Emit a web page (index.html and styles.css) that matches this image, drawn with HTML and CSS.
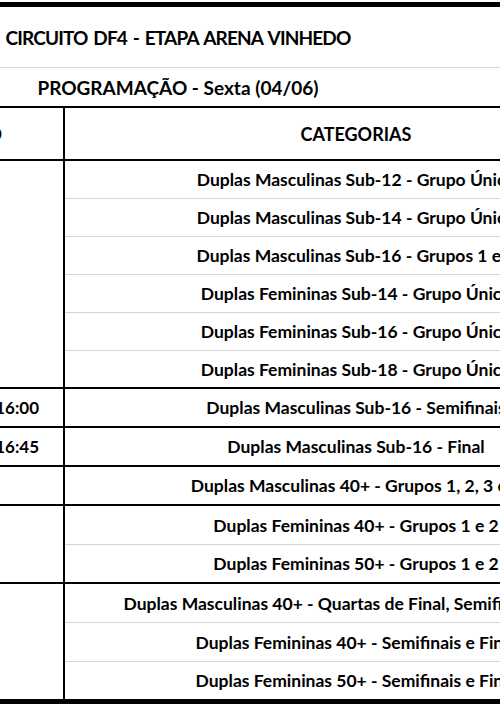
FILE: index.html
```html
<!DOCTYPE html>
<html lang="pt-BR">
<head>
<meta charset="utf-8">
<title>Circuito DF4 - Etapa Arena Vinhedo</title>
<link rel="stylesheet" href="styles.css">
</head>
<body>
<div class="sheet">
  <div class="title">CIRCUITO DF4 - ETAPA ARENA VINHEDO</div>
  <div class="subtitle">PROGRAMAÇÃO - Sexta (04/06)</div>
  <div class="table">
    <div class="time head">HORÁRIO</div>
    <div class="cat head">CATEGORIAS</div>

    <div class="time group6"><span class="hidden-time">13:00 - 15:15</span></div>
    <div class="cat">Duplas Masculinas Sub-12 - Grupo Único</div>
    <div class="cat">Duplas Masculinas Sub-14 - Grupo Único</div>
    <div class="cat">Duplas Masculinas Sub-16 - Grupos 1 e 2</div>
    <div class="cat">Duplas Femininas Sub-14 - Grupo Único</div>
    <div class="cat">Duplas Femininas Sub-16 - Grupo Único</div>
    <div class="cat end">Duplas Femininas Sub-18 - Grupo Único</div>

    <div class="time near">15:15 - 16:00</div>
    <div class="cat end">Duplas Masculinas Sub-16 - Semifinais</div>

    <div class="time near">16:00 - 16:45</div>
    <div class="cat end">Duplas Masculinas Sub-16 - Final</div>

    <div class="time"><span class="hidden-time">16:45 - 18:30</span></div>
    <div class="cat end">Duplas Masculinas 40+ - Grupos 1, 2, 3 e 4</div>

    <div class="time group2"><span class="hidden-time">18:30 - 20:00</span></div>
    <div class="cat">Duplas Femininas 40+ - Grupos 1 e 2</div>
    <div class="cat end">Duplas Femininas 50+ - Grupos 1 e 2</div>

    <div class="time group3 last"><span class="hidden-time">20:00 - 22:00</span></div>
    <div class="cat">Duplas Masculinas 40+ - Quartas de Final, Semifinais e Final</div>
    <div class="cat">Duplas Femininas 40+ - Semifinais e Final</div>
    <div class="cat last">Duplas Femininas 50+ - Semifinais e Final</div>
  </div>
</div>
</body>
</html>
```
FILE: styles.css
```css
html, body {
  margin: 0;
  padding: 0;
  background: #ffffff;
  overflow: hidden;
}

body {
  font-family: "Lato", "Open Sans", sans-serif;
  font-weight: 700;
  color: #000000;
}

.sheet {
  margin-top: 2px;
  margin-left: -291px;
  width: 938px;
  border-top: 5px solid #000000;
}

.title {
  box-sizing: border-box;
  height: 61px;
  border-bottom: 1px solid #d4d4d4;
  display: flex;
  align-items: center;
  justify-content: center;
  font-size: 19px;
  letter-spacing: -0.85px;
  word-spacing: 2px;
  white-space: nowrap;
}

.subtitle {
  box-sizing: border-box;
  height: 40px;
  border-bottom: 2px solid #000000;
  display: flex;
  align-items: center;
  justify-content: center;
  font-size: 19px;
  white-space: nowrap;
}

.table {
  display: grid;
  grid-template-columns: 356px 582px;
  grid-template-rows: 53px repeat(6, 38px) repeat(7, 39px) 42px;
}

.time,
.cat {
  box-sizing: border-box;
  display: flex;
  align-items: center;
  white-space: nowrap;
  overflow: hidden;
}

.time {
  grid-column: 1;
  border-right: 2px solid #000000;
  border-bottom: 2px solid #000000;
  justify-content: center;
  font-size: 17px;
}

.cat {
  grid-column: 2;
  justify-content: center;
  border-bottom: 1px solid #d4d4d4;
  font-size: 17.5px;
}

.cat.end {
  border-bottom: 2px solid #000000;
}

.head {
  border-bottom: 2px solid #000000;
  font-size: 18px;
}

.time.head {
  justify-content: flex-end;
  padding-right: 61px;
}

.time.near {
  justify-content: flex-end;
  padding-right: 24px;
}

.time.group6 { grid-row: span 6; }
.time.group2 { grid-row: span 2; }
.time.group3 { grid-row: span 3; }

.time.last,
.cat.last {
  border-bottom: 5px solid #000000;
}
```
